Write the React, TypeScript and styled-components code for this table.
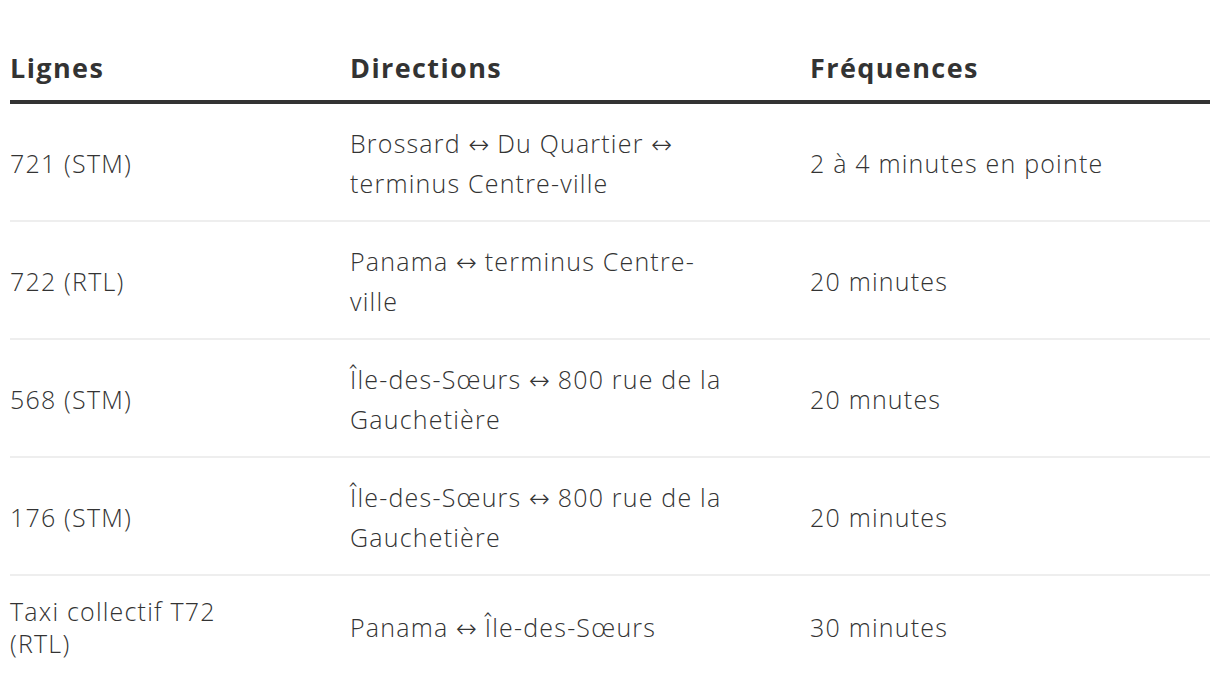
import React from "react";
import styled, { createGlobalStyle } from "styled-components";

const Global = createGlobalStyle`
  html, body { margin: 0; padding: 0; background: #ffffff; }
  body { font-family: "Open Sans", "Noto Sans", sans-serif; color: #333333; }
`;

const Page = styled.div`
  padding: 39px 10px 0 10px;
`;

const Table = styled.table`
  width: 1200px;
  border-collapse: collapse;
  table-layout: fixed;
`;

const Col = styled.col<{ $w: number }>`
  width: ${(p) => p.$w}px;
`;

const HeadCell = styled.th`
  text-align: left;
  font-weight: 700;
  font-size: 27px;
  letter-spacing: 1.4px;
  line-height: 32px;
  color: #333333;
  padding: 13px 76px 16px 0;
  border-bottom: 4px solid #333333;
`;

const Row = styled.tr`
  border-bottom: 2px solid #eeeeee;
  &:last-child { border-bottom: none; }
`;

const Cell = styled.td<{ $tight?: boolean }>`
  font-weight: 300;
  font-size: 25px;
  letter-spacing: 1.2px;
  line-height: ${(p) => (p.$tight ? "32px" : "40px")};
  color: #333333;
  padding: 19px 72px 17px 0;
  vertical-align: middle;
`;

const Arrow = styled.span`
  font-family: "DejaVu Sans", sans-serif;
  font-weight: 300;
  font-size: 25px;
  line-height: 0;
  letter-spacing: 0;
`;

const withArrows = (t: string) =>
  t.split("↔").map((part, i, arr) => (
    <React.Fragment key={i}>
      {part}
      {i < arr.length - 1 && <Arrow>↔</Arrow>}
    </React.Fragment>
  ));

const rows = [
  ["721 (STM)", "Brossard ↔ Du Quartier ↔ terminus Centre-ville", "2 à 4 minutes en pointe"],
  ["722 (RTL)", "Panama ↔ terminus Centre-ville", "20 minutes"],
  ["568 (STM)", "Île-des-Sœurs ↔ 800 rue de la Gauchetière", "20 mnutes"],
  ["176 (STM)", "Île-des-Sœurs ↔ 800 rue de la Gauchetière", "20 minutes"],
  ["Taxi collectif T72 (RTL)", "Panama ↔ Île-des-Sœurs", "30 minutes"],
];

export default function App() {
  return (
    <Page>
      <Global />
      <Table>
        <colgroup>
          <Col $w={340} />
          <Col $w={460} />
          <Col $w={400} />
        </colgroup>
        <thead>
          <tr>
            <HeadCell>Lignes</HeadCell>
            <HeadCell>Directions</HeadCell>
            <HeadCell>Fréquences</HeadCell>
          </tr>
        </thead>
        <tbody>
          {rows.map((r, i) => (
            <Row key={i}>
              <Cell $tight>{r[0]}</Cell>
              <Cell>{withArrows(r[1])}</Cell>
              <Cell>{r[2]}</Cell>
            </Row>
          ))}
        </tbody>
      </Table>
    </Page>
  );
}
